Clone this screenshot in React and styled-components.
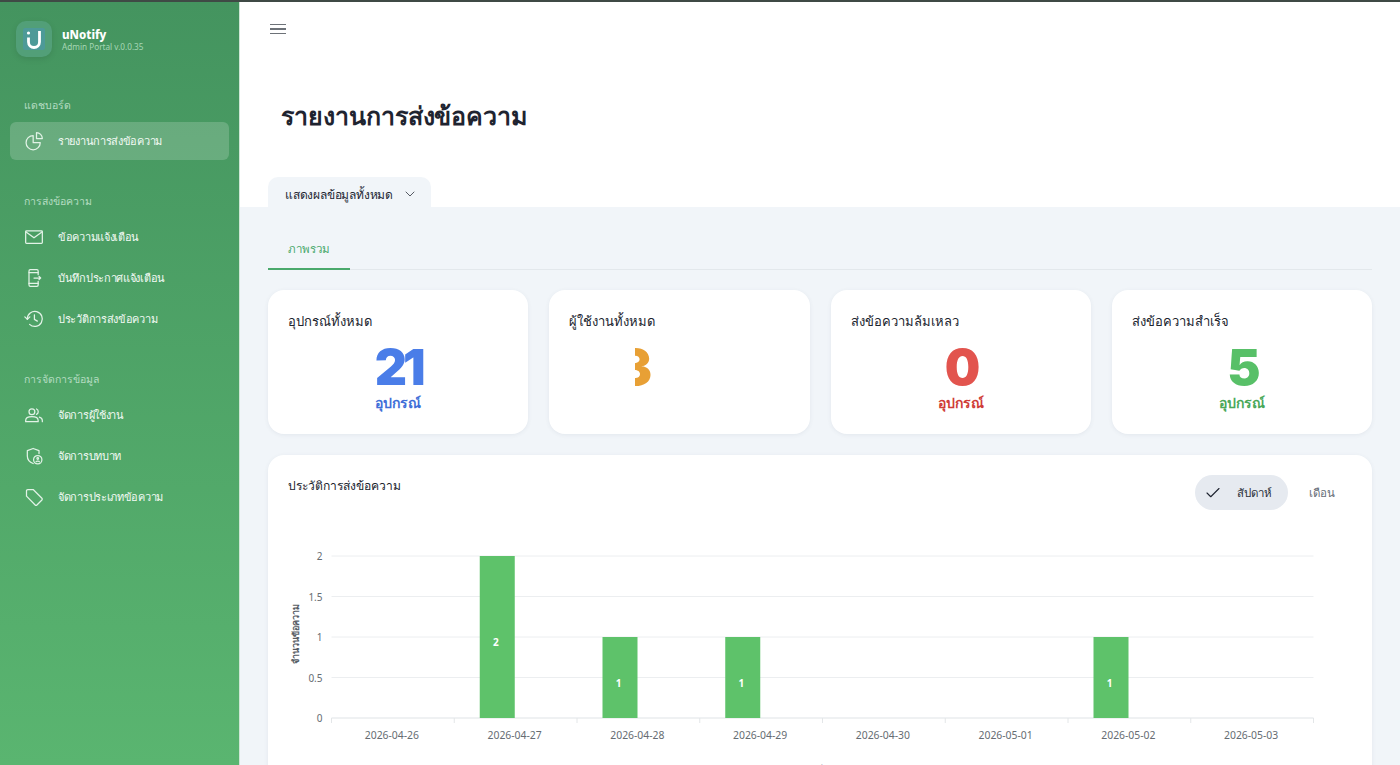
import React from "react";
import styled, { createGlobalStyle } from "styled-components";
import { Check, ChevronDown } from "lucide-react";

const FONT = `"Noto Sans", "Open Sans", "DejaVu Sans", sans-serif`;

const GlobalStyle = createGlobalStyle`
  html, body {
    margin: 0;
    padding: 0;
    height: 100%;
    overflow: hidden;
    font-family: ${FONT};
  }
  * { box-sizing: border-box; }
`;

const Shell = styled.div`
  display: flex;
  width: 1400px;
  height: 765px;
  overflow: hidden;
  background: #fff;
  border-top: 2px solid #3f4a45;
`;

const Sidebar = styled.aside`
  flex: 0 0 240px;
  height: 100%;
  padding: 19px 10px 0;
  background: linear-gradient(180deg, #44945f 0%, #5ab570 100%);
  border-right: 1px solid #cfe6d6;
  color: #fff;
`;

const Brand = styled.div`
  display: flex;
  align-items: center;
  gap: 10px;
  padding-left: 6px;
  margin-bottom: 40px;
`;

const LogoBox = styled.div`
  width: 36px;
  height: 36px;
  border-radius: 10px;
  background: #529f78;
  box-shadow: 0 2px 6px rgba(0, 0, 0, 0.1);
  display: flex;
  align-items: center;
  justify-content: center;
`;

const BrandText = styled.div`
  display: flex;
  flex-direction: column;
  margin-top: 2px;
`;

const BrandName = styled.div`
  font-size: 11.5px;
  font-weight: 800;
  line-height: 14px;
`;

const BrandVersion = styled.div`
  font-size: 8.2px;
  line-height: 10px;
  color: #a5d6b5;
`;

const SectionLabel = styled.div`
  font-size: 10.5px;
  line-height: 16px;
  color: #b4dcc1;
  padding-left: 14px;
  margin-bottom: 9px;
`;

const NavGroup = styled.div`
  margin-bottom: ${(p) => p.$gap}px;
`;

const NavItem = styled.div`
  display: flex;
  align-items: center;
  gap: 14px;
  height: 38px;
  padding-left: 14px;
  margin-bottom: 3px;
  border-radius: 6px;
  font-size: 11px;
  font-weight: 500;
  letter-spacing: -0.3px;
  color: #f2faf4;
  background: ${(p) => (p.$active ? "rgba(255,255,255,0.18)" : "transparent")};
`;

const NavIcon = styled.svg`
  width: 20px;
  height: 20px;
  flex: none;
  fill: none;
  stroke: #e2f3e7;
  stroke-width: 1.5;
  stroke-linecap: round;
  stroke-linejoin: round;
`;

const Main = styled.main`
  flex: 1;
  display: flex;
  flex-direction: column;
  min-width: 0;
`;

const Header = styled.header`
  height: 205px;
  flex: none;
  padding: 0 28px;
  display: flex;
  flex-direction: column;
`;

const MenuButton = styled.div`
  width: 16px;
  margin: 22px 0 0 2px;
  display: flex;
  flex-direction: column;
  gap: 3px;
  span {
    display: block;
    height: 1.3px;
    background: #6d7278;
  }
`;

const PageTitle = styled.h1`
  margin: 63px 0 0 13px;
  font-size: 25px;
  line-height: 36px;
  font-weight: 800;
  letter-spacing: -0.05px;
  color: #1f2430;
`;

const FilterTab = styled.div`
  margin-top: auto;
  width: 163px;
  height: 30px;
  border-radius: 10px 10px 0 0;
  background: #f1f5f9;
  display: flex;
  align-items: center;
  padding: 4px 0 0 17px;
  gap: 9px;
  font-size: 12px;
  font-weight: 500;
  letter-spacing: -0.2px;
  color: #232733;
`;

const Content = styled.div`
  flex: 1;
  background: #f1f5f9;
  padding: 21px 28px 0;
  min-height: 0;
`;

const Tabs = styled.div`
  height: 42px;
  border-bottom: 1px solid #e3e8ec;
  display: flex;
`;

const TabItem = styled.div`
  width: 82px;
  height: 42px;
  text-align: center;
  font-size: 11.5px;
  line-height: 42px;
  color: #4aa96c;
  border-bottom: 2px solid #4aa96c;
`;

const StatGrid = styled.div`
  display: grid;
  grid-template-columns: repeat(4, 1fr);
  gap: 21px;
  margin-top: 20px;
`;

const Card = styled.div`
  background: #fff;
  border-radius: 16px;
  box-shadow: 0 1px 4px rgba(60, 80, 100, 0.08);
`;

const StatCard = styled(Card)`
  height: 144px;
  padding: 22px 20px 0;
`;

const StatTitle = styled.div`
  font-size: 13px;
  line-height: 18px;
  font-weight: 500;
  color: #20242e;
`;

const StatValue = styled.div`
  margin-top: 15px;
  height: 44px;
  text-align: center;
  font-family: Inter, ${FONT};
  font-size: 50px;
  line-height: 44px;
  font-weight: 900;
  letter-spacing: -4px;
  color: ${(p) => p.$color};
`;

const ClippedValue = styled.div`
  width: 17px;
  height: 44px;
  margin: 15px 0 0 66px;
  overflow: hidden;
  font-family: Inter, ${FONT};
  font-size: 50px;
  line-height: 44px;
  font-weight: 900;
  color: ${(p) => p.$color};
  display: flex;
  justify-content: flex-end;
`;

const StatUnit = styled.div`
  margin-top: 5px;
  text-align: center;
  font-size: 14px;
  line-height: 18px;
  font-weight: 600;
  color: ${(p) => p.$color};
`;

const ChartCard = styled(Card)`
  margin-top: 21px;
  height: 400px;
  padding: 21px 20px 0;
`;

const ChartHeader = styled.div`
  display: flex;
  justify-content: space-between;
  align-items: flex-start;
`;

const ChartTitle = styled.div`
  font-size: 12.1px;
  line-height: 20px;
  font-weight: 500;
  color: #20242e;
`;

const RangeToggle = styled.div`
  display: flex;
  align-items: center;
  gap: 21px;
  margin-right: 17px;
  margin-top: -1px;
`;

const RangeOption = styled.div`
  display: flex;
  align-items: center;
  gap: 15px;
  height: 35px;
  font-size: 11.5px;
  border-radius: 18px;
  padding: ${(p) => (p.$active ? "0 16px 0 9px" : "0")};
  background: ${(p) => (p.$active ? "#e6eaf0" : "transparent")};
  color: ${(p) => (p.$active ? "#2b303a" : "#666c76")};
`;

const ChartSvg = styled.svg`
  display: block;
  margin: 0 0 0 -20px;
  font-family: ${FONT};
`;

const X0 = 63.5;
const X1 = 1045.5;
const Y0 = 208;
const YTOP = 46;
const days = ["2026-04-26", "2026-04-27", "2026-04-28", "2026-04-29", "2026-04-30", "2026-05-01", "2026-05-02", "2026-05-03"];
const values = [0, 2, 1, 1, 0, 0, 1, 0];
const ticks = ["0", "0.5", "1", "1.5", "2"];

function BarChart() {
  const step = (X1 - X0) / days.length;
  const unit = (Y0 - YTOP) / 2;
  return (
    <ChartSvg width="1104" height="270" viewBox="0 0 1104 270">
      {ticks.map((t, i) => {
        const y = Y0 - (i * (Y0 - YTOP)) / 4;
        return (
          <g key={t}>
            <line x1={X0} x2={X1} y1={y} y2={y} stroke={i === 0 ? "#dfe3e6" : "#eceef0"} strokeWidth="1" />
            <text x={X0 - 9} y={y + 4} textAnchor="end" fontSize="10" fill="#666c72">{t}</text>
          </g>
        );
      })}
      {days.map((d, i) => (
        <g key={d}>
          <line x1={X0 + i * step} x2={X0 + i * step} y1={Y0} y2={Y0 + 5} stroke="#e3e6e8" />
          <text x={X0 + i * step + step / 2 - 1} y={Y0 + 21} textAnchor="middle" fontSize="10.400" fill="#666c72">{d}</text>
        </g>
      ))}
      <line x1={X1} x2={X1} y1={Y0} y2={Y0 + 5} stroke="#e3e6e8" />
      {values.map((v, i) =>
        v > 0 ? (
          <g key={i}>
            <rect x={X0 + i * step + 25.5} y={Y0 - v * unit} width="35" height={v * unit} fill="#5ec26a" />
            <text x={X0 + i * step + 41.5} y={Y0 - (v * unit) / 2 + 9} textAnchor="middle" fontSize="10" fontWeight="700" fill="#fff">{v}</text>
          </g>
        ) : null
      )}
      <text transform="rotate(-90 31 124)" x="31" y="124" textAnchor="middle" fontSize="9" fontWeight="600" fill="#555b63">จำนวนข้อความ</text>
      <text x="551" y="264" textAnchor="middle" fontSize="9" fontWeight="600" fill="#555b63">วันที่ส่ง</text>
    </ChartSvg>
  );
}

const stats = [
  { title: "อุปกรณ์ทั้งหมด", value: "21", unit: "อุปกรณ์", color: "#4a7de8", unitColor: "#3f6fd8" },
  { title: "ผู้ใช้งานทั้งหมด", value: "3", color: "#e8a035", clipped: true },
  { title: "ส่งข้อความล้มเหลว", value: "0", unit: "อุปกรณ์", color: "#e2544e", unitColor: "#cf3d38" },
  { title: "ส่งข้อความสำเร็จ", value: "5", unit: "อุปกรณ์", color: "#58c068", unitColor: "#4aa85a" },
];

export default function App() {
  return (
    <>
      <GlobalStyle />
      <Shell>
        <Sidebar>
          <Brand>
            <LogoBox>
              <svg width="22" height="22" viewBox="0 0 22 22">
                <rect width="22" height="22" rx="2" fill="#4d9a98" />
                <circle cx="5.5" cy="5" r="1.6" fill="#fff" />
                <path d="M5.500 9.500v4.500a5.500 5.500 0 0 0 11 0V3" fill="none" stroke="#fff" strokeWidth="2.8" />
              </svg>
            </LogoBox>
            <BrandText>
              <BrandName>uNotify</BrandName>
              <BrandVersion>Admin Portal v.0.0.35</BrandVersion>
            </BrandText>
          </Brand>

          <SectionLabel>แดชบอร์ด</SectionLabel>
          <NavGroup $gap={33}>
            <NavItem $active>
              <NavIcon viewBox="0 0 24 24"><path d="M11 5.500a8.500 8.500 0 1 0 8.500 8.500H11z" /><path d="M15 2a7 7 0 0 1 7 7h-7z" /></NavIcon>
              รายงานการส่งข้อความ
            </NavItem>
          </NavGroup>

          <SectionLabel>การส่งข้อความ</SectionLabel>
          <NavGroup $gap={33}>
            <NavItem>
              <NavIcon viewBox="0 0 24 24"><rect x="2" y="4.500" width="20" height="15" rx="1" /><path d="M2.500 6l9.500 7 9.500-7" /></NavIcon>
              ข้อความแจ้งเตือน
            </NavItem>
            <NavItem>
              <NavIcon viewBox="0 0 24 24"><path d="M17 8V3.500a1.500 1.500 0 0 0-1.500-1.500h-8A1.500 1.500 0 0 0 6 3.500v17A1.500 1.500 0 0 0 7.500 22h8a1.500 1.500 0 0 0 1.500-1.500V16" /><path d="M6 5.500h11M6 18.500h11M12 12h8M18 10l2 2-2 2" /></NavIcon>
              บันทึกประกาศแจ้งเตือน
            </NavItem>
            <NavItem>
              <NavIcon viewBox="0 0 24 24"><path d="M4 12a9 9 0 1 1 2.700 6.400" /><path d="M1 9.500l3 3 3-3" /><path d="M12.500 7v5.500l3.500 2" /></NavIcon>
              ประวัติการส่งข้อความ
            </NavItem>
          </NavGroup>

          <SectionLabel>การจัดการข้อมูล</SectionLabel>
          <NavGroup $gap={0}>
            <NavItem>
              <NavIcon viewBox="0 0 24 24"><circle cx="9.500" cy="8" r="3.500" /><path d="M2 20v-1.500C2 15.500 5.500 14 9.500 14s7.500 1.500 7.500 4.500V20z" /><path d="M15 4.800a3.500 3.500 0 0 1 0 6.400M18.500 14.500c2 .7 3.500 2 3.500 4V20" /></NavIcon>
              จัดการผู้ใช้งาน
            </NavItem>
            <NavItem>
              <NavIcon viewBox="0 0 24 24"><path d="M11 21c-4-1.500-7-4.500-7-9V5.500L11 3l7 2.500V9" /><circle cx="16.500" cy="16.500" r="5" /><circle cx="16.500" cy="15" r="1" /><path d="M14.500 19c.4-1 3.600-1 4 0" /></NavIcon>
              จัดการบทบาท
            </NavItem>
            <NavItem>
              <NavIcon viewBox="0 0 24 24"><path d="M3 4.500A1.500 1.500 0 0 1 4.500 3h6.500l10.500 10.500a1.500 1.500 0 0 1 0 2.100l-6 6a1.500 1.500 0 0 1-2.100 0L3 11z" /></NavIcon>
              จัดการประเภทข้อความ
            </NavItem>
          </NavGroup>
        </Sidebar>

        <Main>
          <Header>
            <MenuButton><span /><span /><span /></MenuButton>
            <PageTitle>รายงานการส่งข้อความ</PageTitle>
            <FilterTab>
              แสดงผลข้อมูลทั้งหมด
              <ChevronDown size={16} strokeWidth={1.4} color="#4a4f58" />
            </FilterTab>
          </Header>
          <Content>
            <Tabs><TabItem>ภาพรวม</TabItem></Tabs>
            <StatGrid>
              {stats.map((s) => (
                <StatCard key={s.title}>
                  <StatTitle>{s.title}</StatTitle>
                  {s.clipped ? (
                    <ClippedValue $color={s.color}>{s.value}</ClippedValue>
                  ) : (
                    <StatValue $color={s.color}>{s.value}</StatValue>
                  )}
                  {s.unit && <StatUnit $color={s.unitColor}>{s.unit}</StatUnit>}
                </StatCard>
              ))}
            </StatGrid>
            <ChartCard>
              <ChartHeader>
                <ChartTitle>ประวัติการส่งข้อความ</ChartTitle>
                <RangeToggle>
                  <RangeOption $active><Check size={18} strokeWidth={1.5} color="#1f2430" />สัปดาห์</RangeOption>
                  <RangeOption>เดือน</RangeOption>
                </RangeToggle>
              </ChartHeader>
              <BarChart />
            </ChartCard>
          </Content>
        </Main>
      </Shell>
    </>
  );
}
